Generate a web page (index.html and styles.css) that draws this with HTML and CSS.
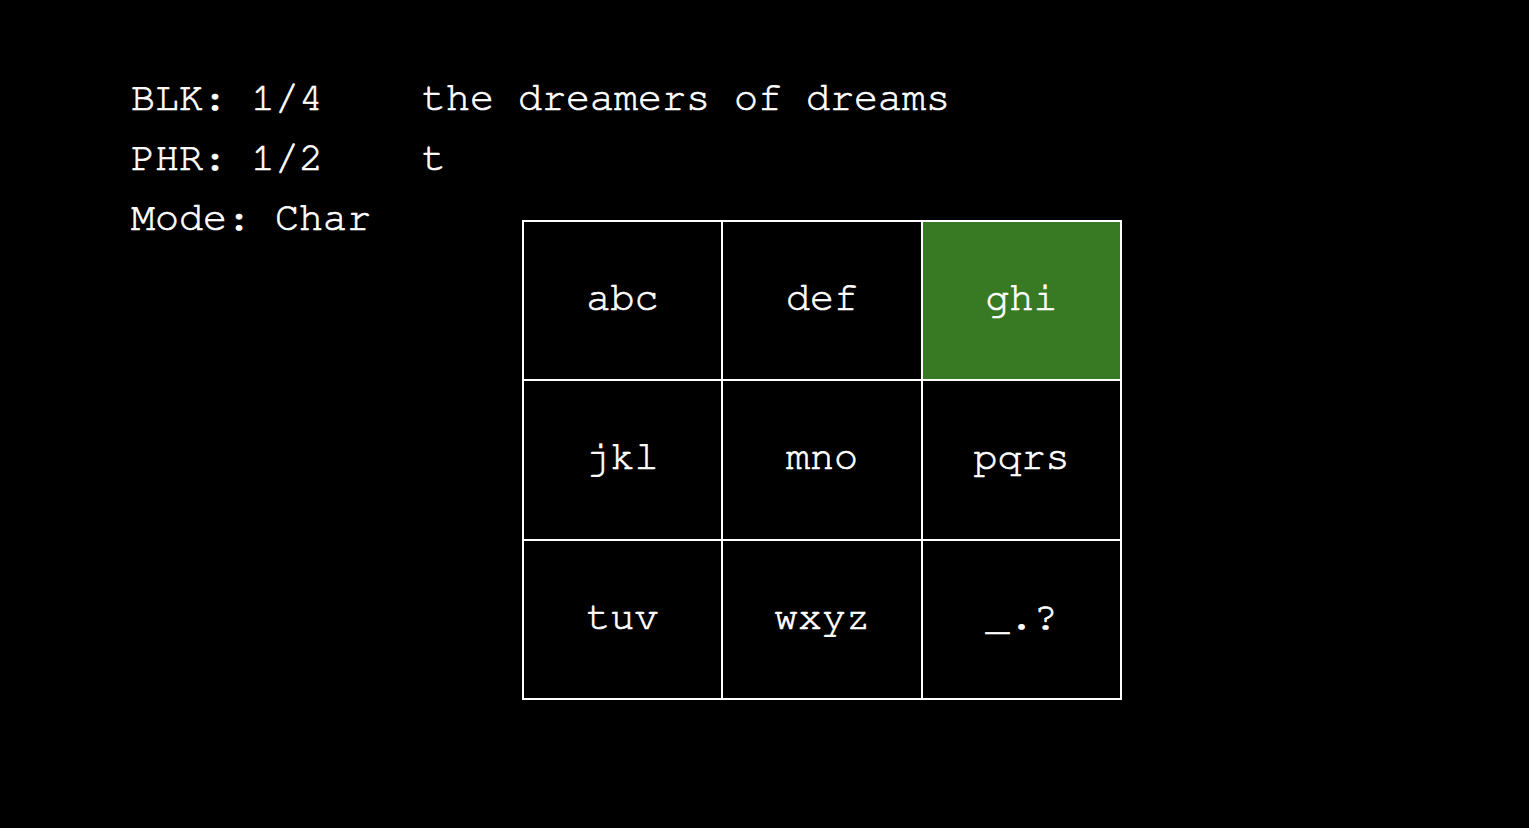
FILE: index.html
```html
<!DOCTYPE html>
<html>
<head>
<meta charset="utf-8">
<link rel="stylesheet" href="styles.css">
</head>
<body>
<div class="screen">
  <div class="line"><span class="label">BLK: 1/4</span><span class="value">the dreamers of dreams</span></div>
  <div class="line"><span class="label">PHR: 1/2</span><span class="value">t</span></div>
  <div class="row">
    <div class="line"><span class="label">Mode: Char</span></div>
    <div class="keypad">
      <div class="key">abc</div>
      <div class="key">def</div>
      <div class="key active">ghi</div>
      <div class="key">jkl</div>
      <div class="key">mno</div>
      <div class="key">pqrs</div>
      <div class="key">tuv</div>
      <div class="key">wxyz</div>
      <div class="key">_.?</div>
    </div>
  </div>
</div>
</body>
</html>
```
FILE: styles.css
```css
html, body {
  margin: 0;
  padding: 0;
  background: #000;
}
.screen {
  width: 1529px;
  height: 828px;
  box-sizing: border-box;
  padding: 68px 0 0 131px;
  font-family: "Nimbus Mono PS", "Nimbus Mono L", "FreeMono", "Courier New", "Liberation Mono", monospace;
  font-size: 40px;
  color: #fff;
  -webkit-text-stroke: 0.7px #fff;
  overflow: hidden;
}
.line {
  height: 60px;
  line-height: 60px;
  white-space: pre;
  display: flex;
}
.label {
  width: 291px;
}
.row {
  display: flex;
  align-items: flex-start;
}
.row .label {
  width: 391px;
}
.keypad {
  margin-top: 32px;
  display: grid;
  grid-template-columns: 197px 198px 197px;
  grid-template-rows: 157px 158px 157px;
  gap: 2px;
  padding: 2px;
  background: #fff;
  -webkit-text-stroke: 0.7px #fff;
}
.key {
  background: #000;
  display: flex;
  align-items: center;
  justify-content: center;
  padding-bottom: 6px;
}
.key.active {
  background: #377a23;
}
```
